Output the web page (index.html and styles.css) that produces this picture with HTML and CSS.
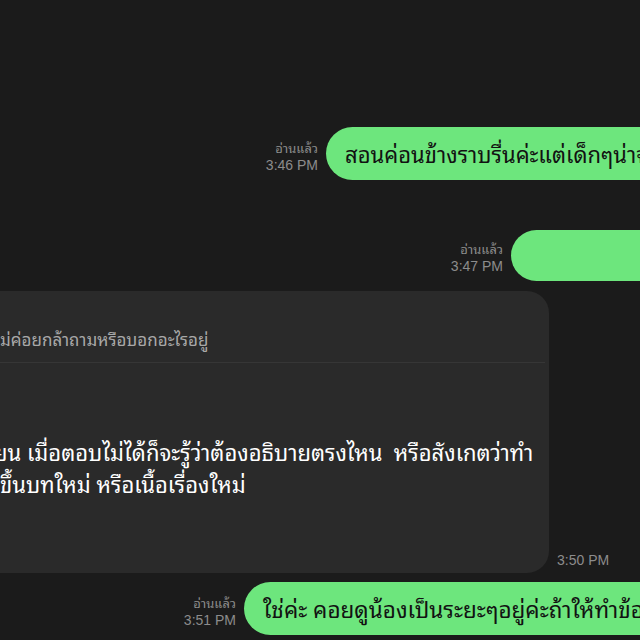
FILE: index.html
```html
<!DOCTYPE html>
<html lang="th">
<head>
<meta charset="utf-8">
<link rel="stylesheet" href="styles.css">
</head>
<body>
<div class="chat">
  <div class="row out row1">
    <div class="meta"><span class="th">อ่านแล้ว</span><span>3:46 PM</span></div>
    <div class="bubble green">สอนค่อนข้างราบรื่นค่ะแต่เด็กๆน่าจะยังไม่ค่อยเข้าใจ</div>
  </div>
  <div class="row out row2">
    <div class="meta"><span class="th">อ่านแล้ว</span><span>3:47 PM</span></div>
    <div class="bubble green">&nbsp;</div>
  </div>
  <div class="row in row3">
    <div class="bubble dark">
      <div class="quote">ม่ค่อยกล้าถามหรือบอกอะไรอยู่</div>
      <div class="body">
        <div class="line l1">ยน เมื่อตอบไม่ได้ก็จะรู้ว่าต้องอธิบายตรงไหน &nbsp;หรือสังเกตว่าทำ</div>
        <div class="line l2">ขึ้นบทใหม่ หรือเนื้อเรื่องใหม่</div>
      </div>
    </div>
    <div class="meta left"><span>3:50 PM</span></div>
  </div>
  <div class="row out row4">
    <div class="meta"><span class="th">อ่านแล้ว</span><span>3:51 PM</span></div>
    <div class="bubble green">ใช่ค่ะ คอยดูน้องเป็นระยะๆอยู่ค่ะถ้าให้ทำข้อสอบ</div>
  </div>
</div>
</body>
</html>
```
FILE: styles.css
```css
html, body {
  margin: 0;
  padding: 0;
  background: #1b1b1b;
}
body {
  width: 640px;
  height: 640px;
  overflow: hidden;
  font-family: "Noto Sans Thai Looped", "Noto Sans Thai", "Noto Sans", sans-serif;
}
.chat {
  display: flex;
  flex-direction: column;
  padding-top: 127px;
}
.row {
  display: flex;
  align-items: flex-end;
  gap: 8px;
  white-space: nowrap;
}
.meta {
  flex: none;
  width: 70px;
  display: flex;
  flex-direction: column;
  align-items: flex-end;
  font-family: "Liberation Sans", "Noto Sans Thai Looped", sans-serif;
  font-size: 14px;
  line-height: 16px;
  color: #8c8c8c;
  padding-bottom: 7px;
}
.meta span {
  display: block;
  height: 16px;
}
.meta .th {
  font-family: "Noto Sans Thai Looped", "Noto Sans Thai", sans-serif;
  font-size: 13px;
  line-height: 14px;
}
.meta.left {
  align-items: flex-start;
  padding-bottom: 5px;
}
.bubble {
  flex: none;
}
.green {
  background: #6de67d;
  color: #121212;
  font-size: 22px;
  line-height: 27px;
  padding: 13px 19px;
  border-radius: 27px;
  min-width: 400px;
}
.row1 { padding-left: 248px; }
.row2 { padding-left: 433px; margin-top: 50px; }
.row2 .green { height: 25px; }
.row3 { margin-top: 10px; }
.row4 { padding-left: 166px; margin-top: 9px; }
.row4 .green { font-size: 22.5px; }
.dark {
  background: #2a2a2a;
  width: 569px;
  margin-left: -20px;
  border-radius: 0 22px 22px 0;
  color: #ffffff;
}
.quote {
  padding: 36px 0 11px 20px;
  font-size: 17px;
  line-height: 24px;
  color: #a8a8a8;
  border-bottom: 1px solid #363636;
  margin-right: 4px;
}
.body {
  padding: 72px 0 74px 14px;
  font-size: 22px;
  line-height: 32px;
}
.l2 { margin-left: 6px; }
```
